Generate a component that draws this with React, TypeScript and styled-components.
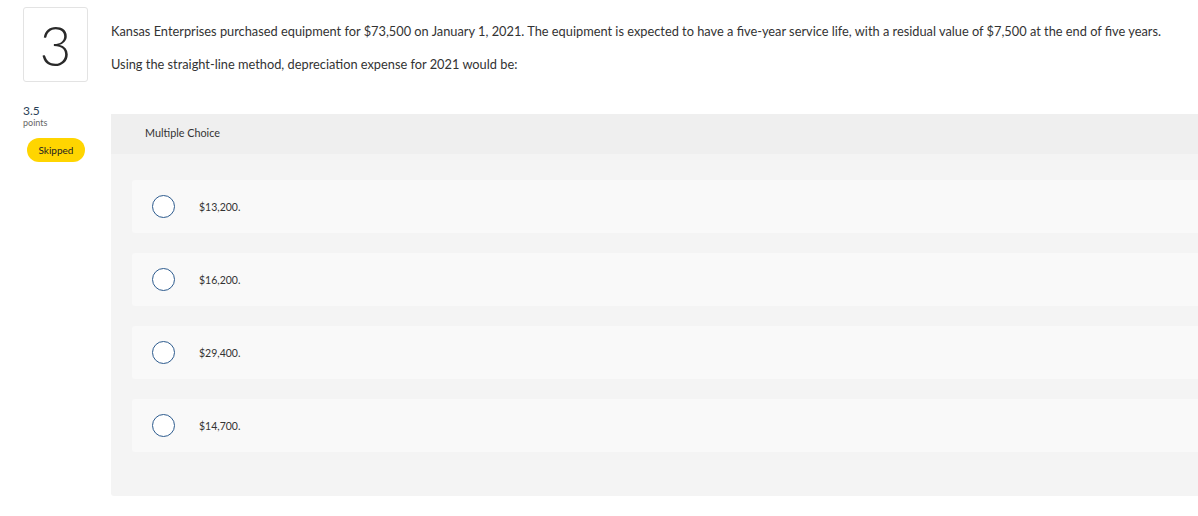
import React from "react";
import styled, { createGlobalStyle } from "styled-components";

const Global = createGlobalStyle`
  html, body { margin: 0; padding: 0; background: #fff; }
  body { font-family: "Lato", "Liberation Sans", sans-serif; color: #333; }
`;

const Page = styled.div`
  display: grid;
  grid-template-columns: 111px 1fr;
  width: 1198px;
  height: 516px;
  overflow: hidden;
`;

const Side = styled.div`
  display: flex;
  flex-direction: column;
  padding: 7px 0 0 23px;
`;

const NumberBox = styled.div`
  width: 63px;
  height: 73px;
  border: 1px solid #e3e3e3;
  border-radius: 3px;
  display: flex;
  align-items: center;
  justify-content: center;
  font-size: 55px;
  font-weight: 300;
  color: #2a2a2a;
`;

const Points = styled.div`
  margin-top: 22px;
  font-size: 12px;
  line-height: 13px;
  color: #2b3f57;
`;

const PointsLabel = styled.div`
  font-size: 9px;
  line-height: 11px;
  color: #666;
`;

const Badge = styled.div`
  margin: 10px 0 0 4px;
  width: 58px;
  height: 24px;
  border-radius: 12px;
  background: #ffd500;
  display: flex;
  align-items: center;
  justify-content: center;
  font-size: 10px;
  color: #222;
`;

const Main = styled.div`
  display: flex;
  flex-direction: column;
`;

const Question = styled.div`
  padding-top: 22px;
  height: 114px;
  box-sizing: border-box;
`;

const Para = styled.p`
  margin: 0 0 15px;
  font-size: 12.8px;
  line-height: 18px;
  color: #333;
`;

const Panel = styled.div`
  background: #f4f4f4;
  height: 382px;
  border-radius: 0 0 0 3px;
  display: flex;
  flex-direction: column;
`;

const PanelHeader = styled.div`
  height: 40px;
  box-sizing: border-box;
  padding: 0 0 3px 34px;
  background: #efefef;
  display: flex;
  align-items: center;
  font-size: 10.8px;
  color: #333;
`;

const Options = styled.div`
  display: flex;
  flex-direction: column;
  gap: 20px;
  padding: 26px 0 0 21px;
`;

const Option = styled.div`
  height: 53px;
  background: #f9f9f9;
  border-radius: 3px 0 0 3px;
  display: flex;
  align-items: center;
  padding-left: 20px;
`;

const Radio = styled.span`
  width: 23px;
  height: 23px;
  border: 1.5px solid #2d5b8e;
  border-radius: 50%;
  background: #fff;
  box-sizing: border-box;
  flex: none;
`;

const OptionText = styled.span`
  margin-left: 24px;
  font-size: 10.5px;
  color: #333;
`;

const choices = ["$13,200.", "$16,200.", "$29,400.", "$14,700."];

export default function App() {
  return (
    <Page>
      <Global />
      <Side>
        <NumberBox>3</NumberBox>
        <Points>3.5</Points>
        <PointsLabel>points</PointsLabel>
        <Badge>Skipped</Badge>
      </Side>
      <Main>
        <Question>
          <Para>
            Kansas Enterprises purchased equipment for $73,500 on January 1, 2021. The equipment is expected to have a five-year service life, with a residual value of $7,500 at the end of five years.
          </Para>
          <Para>Using the straight-line method, depreciation expense for 2021 would be:</Para>
        </Question>
        <Panel>
          <PanelHeader>Multiple Choice</PanelHeader>
          <Options>
            {choices.map((c) => (
              <Option key={c}>
                <Radio />
                <OptionText>{c}</OptionText>
              </Option>
            ))}
          </Options>
        </Panel>
      </Main>
    </Page>
  );
}
